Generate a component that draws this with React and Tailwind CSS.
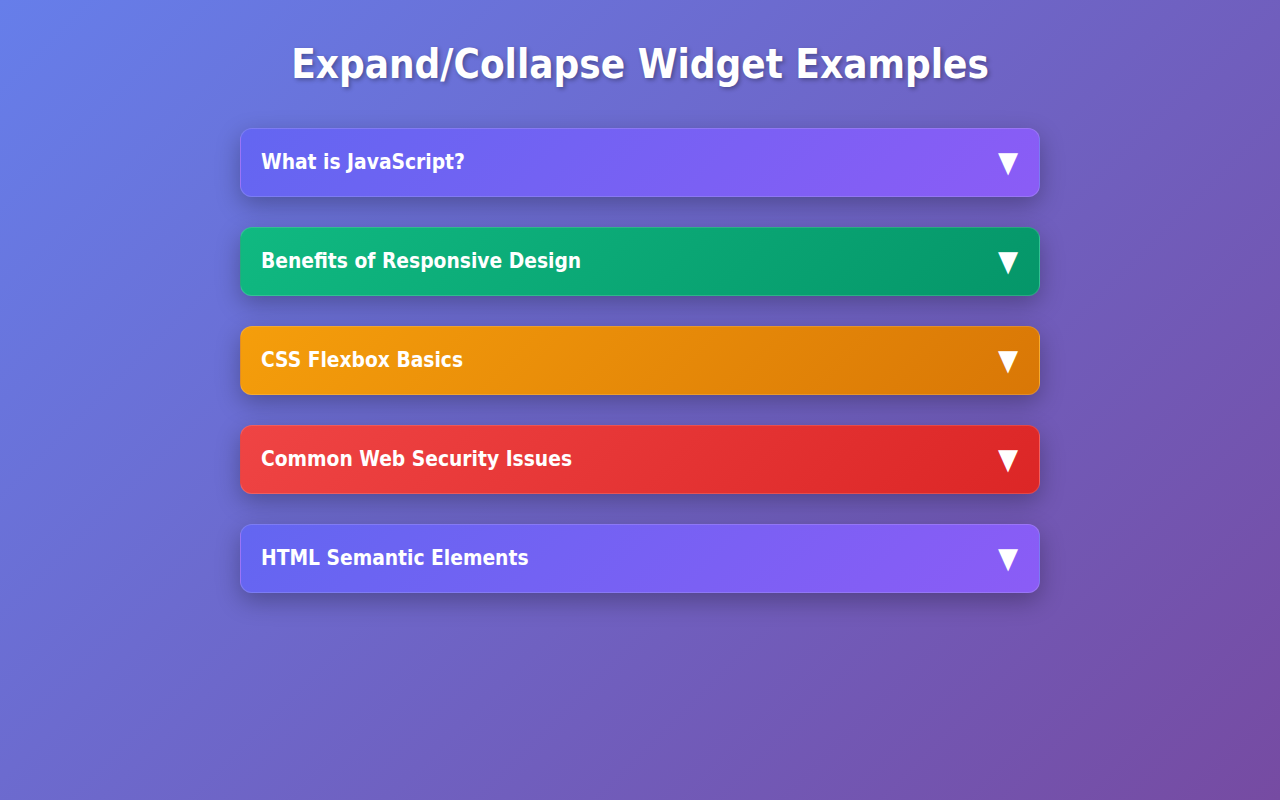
import React, { useState } from "react";

const items = [
  {
    title: "What is JavaScript?",
    body: "JavaScript is a programming language that makes web pages interactive.",
    bg: "bg-[linear-gradient(135deg,#6366f1,#8b5cf6)]",
  },
  {
    title: "Benefits of Responsive Design",
    body: "Responsive design lets one layout work on phones, tablets and desktops.",
    bg: "bg-[linear-gradient(135deg,#10b981,#059669)]",
  },
  {
    title: "CSS Flexbox Basics",
    body: "Flexbox arranges items in a row or column and distributes space between them.",
    bg: "bg-[linear-gradient(135deg,#f59e0b,#d97706)]",
  },
  {
    title: "Common Web Security Issues",
    body: "XSS, CSRF and SQL injection are among the most common problems.",
    bg: "bg-[linear-gradient(135deg,#ef4444,#dc2626)]",
  },
  {
    title: "HTML Semantic Elements",
    body: "Elements like header, nav, main and footer describe their content.",
    bg: "bg-[linear-gradient(135deg,#6366f1,#8b5cf6)]",
  },
];

function Widget({ item }) {
  const [open, setOpen] = useState(false);
  return (
    <div
      className={`${item.bg} rounded-xl border border-white/15 shadow-[0_8px_25px_rgba(0,0,0,0.28)] overflow-hidden`}
    >
      <button
        onClick={() => setOpen(!open)}
        className="w-full flex items-center justify-between pl-5 pr-[21px] h-[67px] text-left text-white cursor-pointer"
      >
        <span className="text-[20.8px] font-bold">{item.title}</span>
        <span className="text-[29px] leading-none">{open ? "▲" : "▼"}</span>
      </button>
      {open && (
        <div className="px-5 pb-5 text-white/90 text-[16px]">{item.body}</div>
      )}
    </div>
  );
}

export default function App() {
  return (
    <div
      className="min-h-[800px] bg-[linear-gradient(135deg,#667eea,#764ba2)] px-5 pt-[40px] pb-10"
      style={{ fontFamily: "'DejaVu Sans Condensed', 'DejaVu Sans', sans-serif" }}
    >
      <h1 className="text-center text-white text-[40px] font-bold leading-[1.2] mb-[40px] [text-shadow:2px_2px_4px_rgba(0,0,0,0.3)]">
        Expand/Collapse Widget Examples
      </h1>
      <div className="max-w-[800px] mx-auto flex flex-col gap-[30px]">
        {items.map((item) => (
          <Widget key={item.title} item={item} />
        ))}
      </div>
    </div>
  );
}
